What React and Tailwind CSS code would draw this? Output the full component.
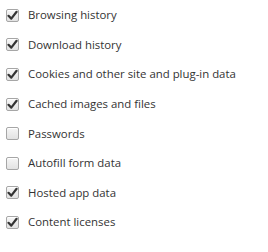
const items = [
  { label: "Browsing history", checked: true },
  { label: "Download history", checked: true },
  { label: "Cookies and other site and plug-in data", checked: true },
  { label: "Cached images and files", checked: true },
  { label: "Passwords", checked: false },
  { label: "Autofill form data", checked: false },
  { label: "Hosted app data", checked: true },
  { label: "Content licenses", checked: true },
]

function Box({ checked }) {
  return (
    <span className="w-[13px] h-[13px] rounded-[2px] border border-[#a6a6a6] bg-gradient-to-b from-[#f6f6f6] to-[#e2e2e2] flex items-center justify-center shrink-0 shadow-[inset_0_1px_0_#fff]">
      {checked && (
        <svg width="11" height="11" viewBox="0 0 11 11">
          <path d="M1.5 5.8 L4.3 8.6 L9.6 1.8" fill="none" stroke="#333" strokeWidth="2.2" strokeLinecap="round" strokeLinejoin="round" />
        </svg>
      )}
    </span>
  )
}

export default function App() {
  return (
    <div className="w-[268px] h-[252px] bg-white pt-[0.5px] font-['Open_Sans',sans-serif] text-[11.4px] text-[#333]">
      {items.map(item => (
        <label key={item.label} className="h-[29.6px] flex items-center pl-[6px] gap-[9px]">
          <Box checked={item.checked} />
          <span className="leading-[16px]">{item.label}</span>
        </label>
      ))}
    </div>
  )
}
